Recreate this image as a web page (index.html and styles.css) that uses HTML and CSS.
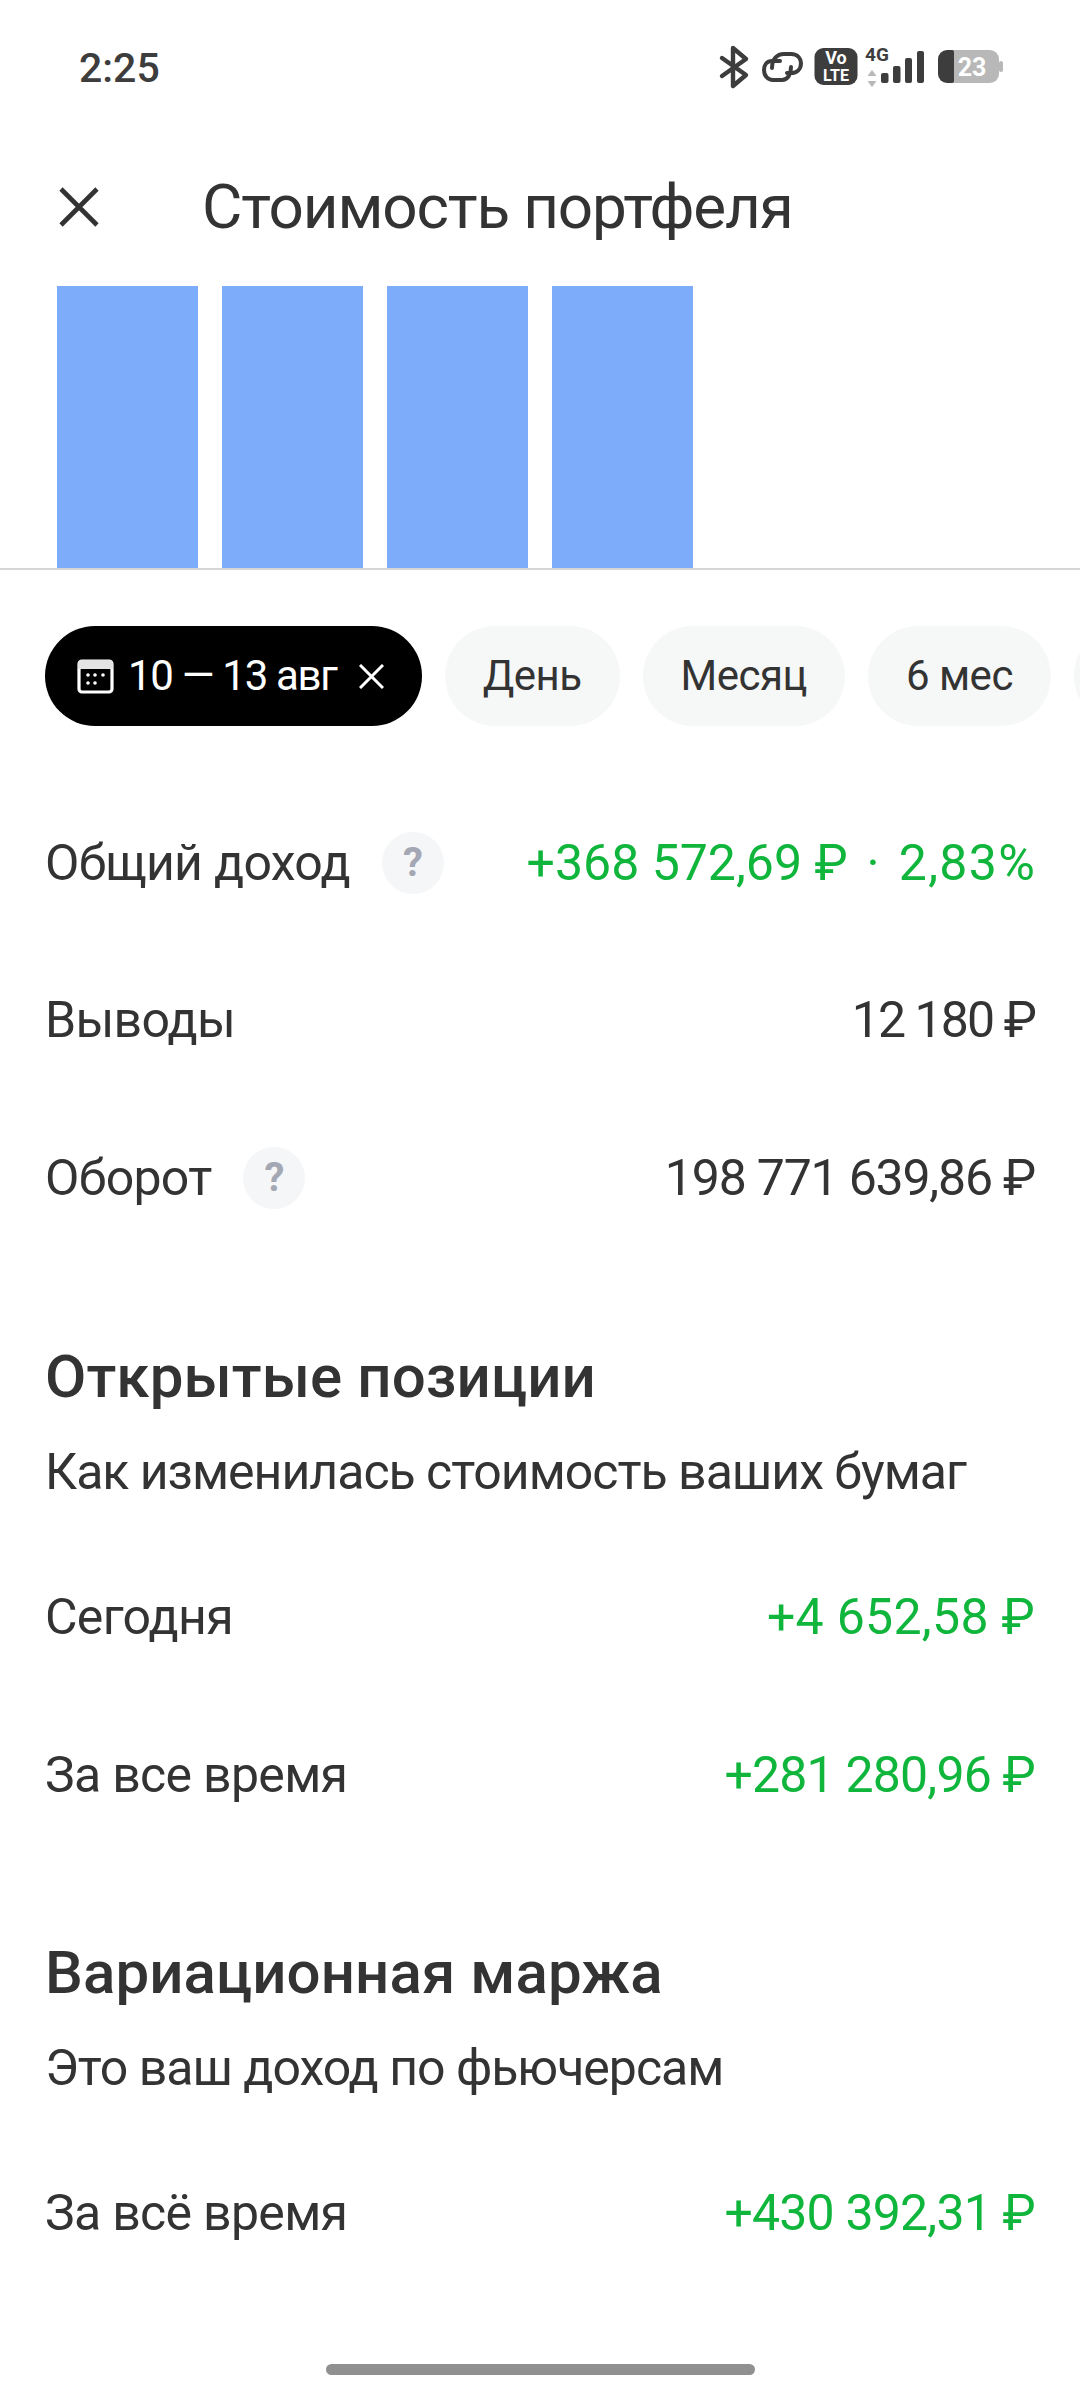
FILE: index.html
```html
<!DOCTYPE html>
<html lang="ru">
<head>
<meta charset="utf-8">
<title>Стоимость портфеля</title>
<link rel="stylesheet" href="styles.css">
</head>
<body>
<div class="screen">
  <div class="status">
    <span class="time">2:25</span>
    <svg class="status-icons" width="340" height="70" viewBox="0 0 340 70">
      <path d="M42 28 L66 45 L53 56 V18 L66 29 L42 46" fill="none" stroke="#3d3d3d" stroke-width="4.4" stroke-linejoin="round" stroke-linecap="round"/>
      <path d="M92 38 C92 29 97 24 104 24 H111 C118 24 121 29 121 33 C121 39 117 43 111 43 H107" fill="none" stroke="#3d3d3d" stroke-width="4" stroke-linecap="round"/>
      <path d="M100 31 H92 C87 31 84 35 84 40 C84 46 88 50 93 50 H102 C108 50 111 44 111 37" fill="none" stroke="#3d3d3d" stroke-width="4" stroke-linecap="round"/>
      <rect x="134.500" y="18" width="43" height="37" rx="9" fill="#3d3d3d"/>
      <text x="156" y="34" class="volte volte-vo">Vo</text>
      <text x="156" y="51" class="volte">LTE</text>
      <text x="185" y="31" class="fourg">4G</text>
      <path d="M192 40 l-4.500 6 h9 z M192 57 l-4.500 -6 h9 z" fill="#b8b8b8"/>
      <rect x="201" y="43" width="7.500" height="10" rx="2" fill="#3d3d3d"/>
      <rect x="213" y="36" width="7.500" height="17" rx="2" fill="#3d3d3d"/>
      <rect x="225" y="28" width="7" height="25" rx="2" fill="#3d3d3d"/>
      <rect x="237" y="21" width="7" height="32" rx="2" fill="#3d3d3d"/>
      <path d="M270 20 H310 a9 9 0 0 1 9 9 V44 a9 9 0 0 1 -9 9 H270 z" fill="#b8b8b8"/>
      <rect x="319" y="31" width="4" height="11" rx="2" fill="#b8b8b8"/>
      <path d="M272 20 H267 a9 9 0 0 0 -9 9 V44 a9 9 0 0 0 9 9 H272 a2 2 0 0 0 2 -2 V22 a2 2 0 0 0 -2 -2 z" fill="#3d3d3d"/>
      <text x="292" y="46" class="battery">23</text>
    </svg>
  </div>
  <header class="topbar">
    <svg class="close" width="40" height="40" viewBox="0 0 40 40"><path d="M2 2 L38 38 M38 2 L2 38" stroke="#333" stroke-width="4.600" fill="none"/></svg>
    <h1 class="title">Стоимость портфеля</h1>
  </header>
  <div class="chart">
    <div class="bar"></div><div class="bar"></div><div class="bar"></div><div class="bar"></div>
  </div>
  <div class="chips">
    <div class="chip chip-active">
      <svg class="cal" width="37" height="35" viewBox="0 0 37 35"><path d="M2 5 a3 3 0 0 1 3 -3 H32 a3 3 0 0 1 3 3 V30 a3 3 0 0 1 -3 3 H5 a3 3 0 0 1 -3 -3 z" fill="none" stroke="#fff" stroke-width="3.200"/><path d="M1 5 a4 4 0 0 1 4 -4 H32 a4 4 0 0 1 4 4 V10 H1 z" fill="#e4e4e4"/><circle cx="11" cy="16" r="1.800" fill="#fff"/><circle cx="18" cy="16" r="1.800" fill="#fff"/><circle cx="26" cy="16" r="1.800" fill="#fff"/><circle cx="11" cy="24" r="1.800" fill="#fff"/><circle cx="18" cy="24" r="1.800" fill="#fff"/></svg>
      <span class="chip-text">10 — 13 авг</span>
      <svg class="chip-x" width="25" height="25" viewBox="0 0 25 25"><path d="M1 1 L24 24 M24 1 L1 24" stroke="#fff" stroke-width="3"/></svg>
    </div>
    <div class="chip">День</div>
    <div class="chip">Месяц</div>
    <div class="chip">6 мес</div>
    <div class="chip chip-cut"></div>
  </div>
  <section class="rows-first">
    <div class="row"><div class="label">Общий доход<span class="help">?</span></div><div class="value green">+368 572,69 ₽<span class="dot">·</span><span class="pct">2,83%</span></div></div>
    <div class="row"><div class="label">Выводы</div><div class="value tight-l">12 180 ₽</div></div>
    <div class="row"><div class="label">Оборот<span class="help">?</span></div><div class="value tight-m">198 771 639,86 ₽</div></div>
  </section>
  <section class="group">
    <h2 class="heading">Открытые позиции</h2>
    <p class="sub">Как изменилась стоимость ваших бумаг</p>
    <div class="row"><div class="label">Сегодня</div><div class="value green wide">+4 652,58 ₽</div></div>
    <div class="row"><div class="label">За все время</div><div class="value green tight-s">+281 280,96 ₽</div></div>
  </section>
  <section class="group group-last">
    <h2 class="heading">Вариационная маржа</h2>
    <p class="sub">Это ваш доход по фьючерсам</p>
    <div class="row"><div class="label">За всё время</div><div class="value green tight-s">+430 392,31 ₽</div></div>
  </section>
  <div class="home"></div>
</div>
</body>
</html>
```
FILE: styles.css
```css
* { box-sizing: border-box; }
html, body { margin: 0; padding: 0; background: #fff; }
body { font-family: "Roboto", "Noto Sans", sans-serif; color: #333; }
.screen { position: relative; width: 1080px; height: 2392px; overflow: hidden; background: #fff; }
.status { height: 136px; padding: 30px 60px 0 79px; display: flex; justify-content: space-between; align-items: flex-start; }
.time { margin-top: 16px; font-size: 41px; font-weight: 500; line-height: 44px; color: #3d3d3d; }
.status-icons { display: block; }
.volte { font: 700 16px "Roboto", sans-serif; fill: #fff; text-anchor: middle; }
.volte-vo { font-size: 18px; }
.fourg { font: 700 19px "Roboto", sans-serif; fill: #3d3d3d; }
.battery { font: 700 25px "Roboto", sans-serif; fill: #fff; text-anchor: middle; }
.topbar { height: 150px; padding: 0 0 8px 59px; display: flex; align-items: center; gap: 103px; }
.close { flex: none; }
.title { margin: 0; font-size: 62px; font-weight: 400; color: #333; line-height: 80px; letter-spacing: -1.15px; }
.chart { height: 284px; padding-left: 57px; display: flex; gap: 24px; border-bottom: 2px solid #d6d6d6; }
.bar { width: 141px; background: #7dadfa; }
.chips { display: flex; gap: 23px; padding: 56px 0 0 45px; overflow: hidden; }
.chip { flex: none; height: 100px; padding: 0 38px; border-radius: 50px; background: #f6f7f7; font-size: 42px; line-height: 100px; color: #333; letter-spacing: -0.5px; }
.chip-active { display: flex; align-items: center; background: #000; color: #fff; padding: 0 38px 0 32px; letter-spacing: -1.3px; }
.chip-cut { width: 120px; }
.cal { flex: none; margin-right: 14px; }
.chip-x { flex: none; margin-left: 22px; }
.rows-first { margin-top: 58px; }
.row { height: 157.500px; padding: 0 45px; display: flex; justify-content: space-between; align-items: center; }
.label { display: flex; align-items: center; font-size: 50px; color: #333; letter-spacing: -0.7px; }
.value { font-size: 50px; color: #333; white-space: pre; }
.green { color: #10b53c; }
.wide { letter-spacing: 0.3px; }
.tight-s { letter-spacing: -0.8px; }
.tight-m { letter-spacing: -1.2px; }
.tight-l { letter-spacing: -1.9px; }
.dot { margin: 0 19px; }
.pct { letter-spacing: 1.4px; margin-right: -1.4px; }
.help { width: 62px; height: 62px; margin-left: 32px; border-radius: 50%; background: #f5f6f7; color: #a4a7b4; font-size: 40px; font-weight: 700; letter-spacing: 0; display: flex; align-items: center; justify-content: center; }
.group { margin-top: 82px; }
.group-last { margin-top: 81px; }
.heading { margin: 0; padding: 0 45px; font-size: 60px; font-weight: 500; line-height: 76px; color: #333; letter-spacing: 0.1px; }
.sub { margin: 27px 0 37px; padding: 0 45px; font-size: 50px; line-height: 60px; color: #333; letter-spacing: -1px; }
.home { position: absolute; left: 326px; top: 2364px; width: 429px; height: 11px; border-radius: 6px; background: #909090; }
```
